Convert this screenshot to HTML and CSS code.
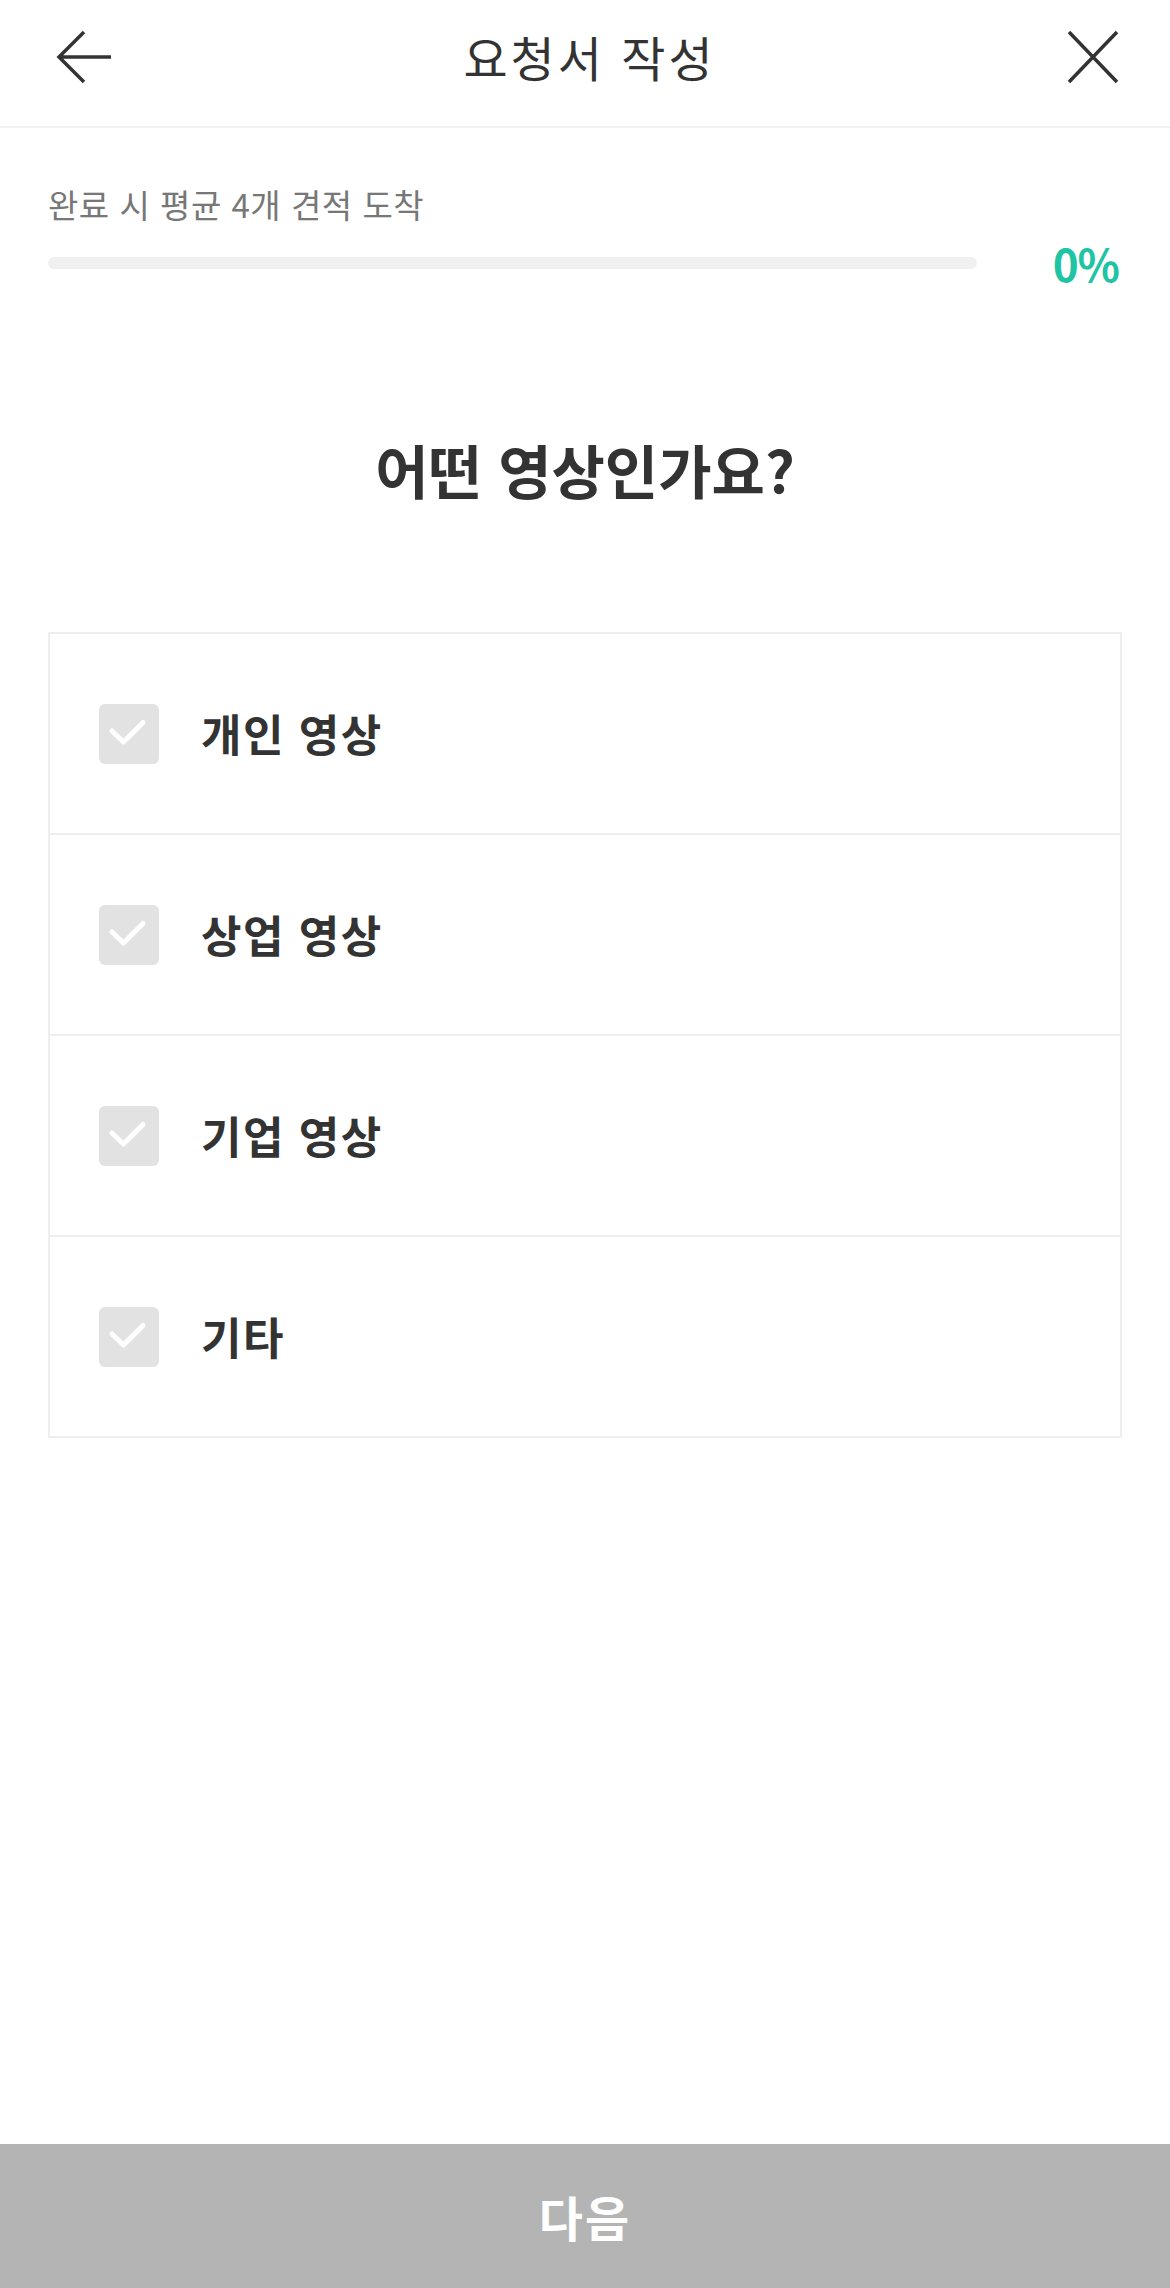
FILE: index.html
```html
<!DOCTYPE html>
<html lang="ko">
<head>
<meta charset="utf-8">
<title>요청서 작성</title>
<link rel="stylesheet" href="styles.css">
</head>
<body>
<div class="page">
  <header class="topbar">
    <button class="icon-btn back" aria-label="뒤로">
      <svg width="56" height="56" viewBox="0 0 56 56"><path d="M28 3 L3 28 L28 53 M3 28 H55" fill="none" stroke="#333" stroke-width="3.5" stroke-linejoin="miter"/></svg>
    </button>
    <h1 class="title">요청서 작성</h1>
    <button class="icon-btn close" aria-label="닫기">
      <svg width="52" height="54" viewBox="0 0 52 54"><path d="M2 2 L50 52 M50 2 L2 52" fill="none" stroke="#333" stroke-width="3.5"/></svg>
    </button>
  </header>

  <section class="progress">
    <p class="progress-label">완료 시 평균 4개 견적 도착</p>
    <div class="progress-row">
      <div class="bar"><div class="bar-fill" style="width:0%"></div></div>
      <span class="percent">0%</span>
    </div>
  </section>

  <h2 class="question">어떤 영상인가요?</h2>

  <ul class="options">
    <li class="option"><span class="check"><svg width="60" height="60" viewBox="0 0 60 60"><path d="M13 27 L24.5 38 L44 18.5" fill="none" stroke="#fff" stroke-width="5" stroke-linecap="round" stroke-linejoin="round"/></svg></span><span class="label">개인 영상</span></li>
    <li class="option"><span class="check"><svg width="60" height="60" viewBox="0 0 60 60"><path d="M13 27 L24.5 38 L44 18.5" fill="none" stroke="#fff" stroke-width="5" stroke-linecap="round" stroke-linejoin="round"/></svg></span><span class="label">상업 영상</span></li>
    <li class="option"><span class="check"><svg width="60" height="60" viewBox="0 0 60 60"><path d="M13 27 L24.5 38 L44 18.5" fill="none" stroke="#fff" stroke-width="5" stroke-linecap="round" stroke-linejoin="round"/></svg></span><span class="label">기업 영상</span></li>
    <li class="option"><span class="check"><svg width="60" height="60" viewBox="0 0 60 60"><path d="M13 27 L24.5 38 L44 18.5" fill="none" stroke="#fff" stroke-width="5" stroke-linecap="round" stroke-linejoin="round"/></svg></span><span class="label">기타</span></li>
  </ul>

  <div class="spacer"></div>

  <button class="next">다음</button>
</div>
</body>
</html>
```
FILE: styles.css
```css
* { box-sizing: border-box; }
html, body {
  margin: 0;
  padding: 0;
  background: #fff;
  font-family: "Noto Sans CJK KR", "Noto Sans", sans-serif;
  color: #333;
}
.page {
  min-height: 2288px;
  display: flex;
  flex-direction: column;
}
.topbar {
  height: 128px;
  padding: 0 51px 12px 56px;
  border-bottom: 2px solid #f2f2f2;
  display: flex;
  align-items: center;
  justify-content: space-between;
}
.icon-btn {
  border: 0;
  background: none;
  padding: 0;
  margin: 0;
  display: flex;
}
.title {
  margin: 0;
  font-size: 48px;
  font-weight: 400;
  line-height: 1.2;
  color: #333;
  letter-spacing: 3px;
}
.progress {
  padding: 0 51px 0 48px;
  margin-top: 57px;
}
.progress-label {
  margin: 0;
  font-size: 33px;
  line-height: 38px;
  color: #777;
  letter-spacing: 0.5px;
}
.progress-row {
  margin-top: 17px;
  display: flex;
  align-items: center;
  gap: 76px;
  height: 46px;
}
.bar {
  flex: 1;
  height: 12px;
  border-radius: 6px;
  background: #f0f0f0;
  overflow: hidden;
}
.bar-fill {
  height: 100%;
  background: #1fc4a4;
}
.percent {
  font-size: 44px;
  font-weight: 700;
  line-height: 46px;
  color: #1fc4a4;
  letter-spacing: -1px;
}
.question {
  margin: 148px 0 0;
  text-align: center;
  font-size: 58px;
  font-weight: 700;
  line-height: 70px;
  color: #333;
}
.options {
  list-style: none;
  margin: 128px 48px 0;
  padding: 0;
  border: 2px solid #eeeeee;
}
.option {
  height: 201px;
  display: flex;
  align-items: center;
  padding-left: 49px;
  gap: 42px;
  border-top: 2px solid #eeeeee;
}
.option:first-child {
  border-top: 0;
  height: 199px;
}
.check {
  width: 60px;
  height: 60px;
  border-radius: 6px;
  background: #e2e2e2;
  display: flex;
}
.label {
  font-size: 44px;
  font-weight: 700;
  color: #333;
  line-height: 1.2;
  letter-spacing: 1.5px;
}
.spacer { flex: 1; }
.next {
  height: 144px;
  width: 100%;
  border: 0;
  margin: 0;
  background: #b4b4b4;
  color: #fff;
  font-family: "Noto Sans CJK KR", "Noto Sans", sans-serif;
  font-size: 48px;
  font-weight: 700;
  letter-spacing: 2px;
}
```
